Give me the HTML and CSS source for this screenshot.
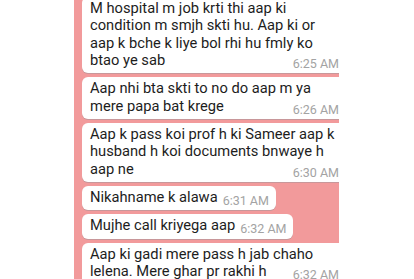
FILE: index.html
```html
<!DOCTYPE html>
<html lang="en">
<head>
    <meta charset="UTF-8">
    <meta name="viewport" content="width=device-width, initial-scale=1.0">
    <title>Chat</title>
    <link rel="stylesheet" href="styles.css">
</head>
<body>
    <div class="chat">
        <div class="msg wide">
            M hospital m job krti thi aap ki<br>
            condition m smjh skti hu. Aap ki or<br>
            aap k bche k liye bol rhi hu fmly ko<br>
            btao ye sab<span class="time">6:25 AM</span>
        </div>
        <div class="msg wide">
            Aap nhi bta skti to no do aap m ya<br>
            mere papa bat krege<span class="time">6:26 AM</span>
        </div>
        <div class="msg wide">
            Aap k pass koi prof h ki Sameer aap k<br>
            husband h koi documents bnwaye h<br>
            aap ne<span class="time">6:30 AM</span>
        </div>
        <div class="msg">
            Nikahname k alawa<span class="time">6:31 AM</span>
        </div>
        <div class="msg">
            Mujhe call kriyega aap<span class="time">6:32 AM</span>
        </div>
        <div class="msg wide">
            Aap ki gadi mere pass h jab chaho<br>
            lelena. Mere ghar pr rakhi h<span class="time">6:32 AM</span>
        </div>
    </div>
</body>
</html>
```

FILE: styles.css
```css
* {
    margin: 0;
    padding: 0;
    box-sizing: border-box;
}

body {
    background: #ffffff;
    font-family: Roboto, "Noto Sans", sans-serif;
    overflow: hidden;
    height: 279px;
}

/* Pink chat column */
.chat {
    width: 265px;
    margin: -3px 0 0 74px;
    padding-left: 8px;
    background: #f29a9b;
    overflow: hidden;
    display: flex;
    flex-direction: column;
    align-items: flex-start;
    gap: 4px;
    min-height: 300px;
}

/* Message bubble */
.msg {
    display: flow-root;
    background: #ffffff;
    color: #1d1d1d;
    font-size: 14.7px;
    line-height: 17.33px;
    white-space: nowrap;
    padding: 3px 7px 4px 8px;
    border-radius: 6px;
    box-shadow: 0 1px 0 #c8979a;
}

.msg.wide {
    width: calc(100% + 7px);
    flex-shrink: 0;
}

.time {
    float: right;
    margin: 5px 0 -5px 5px;
    font-size: 12.5px;
    line-height: 14px;
    color: #a3a3a3;
}
```
